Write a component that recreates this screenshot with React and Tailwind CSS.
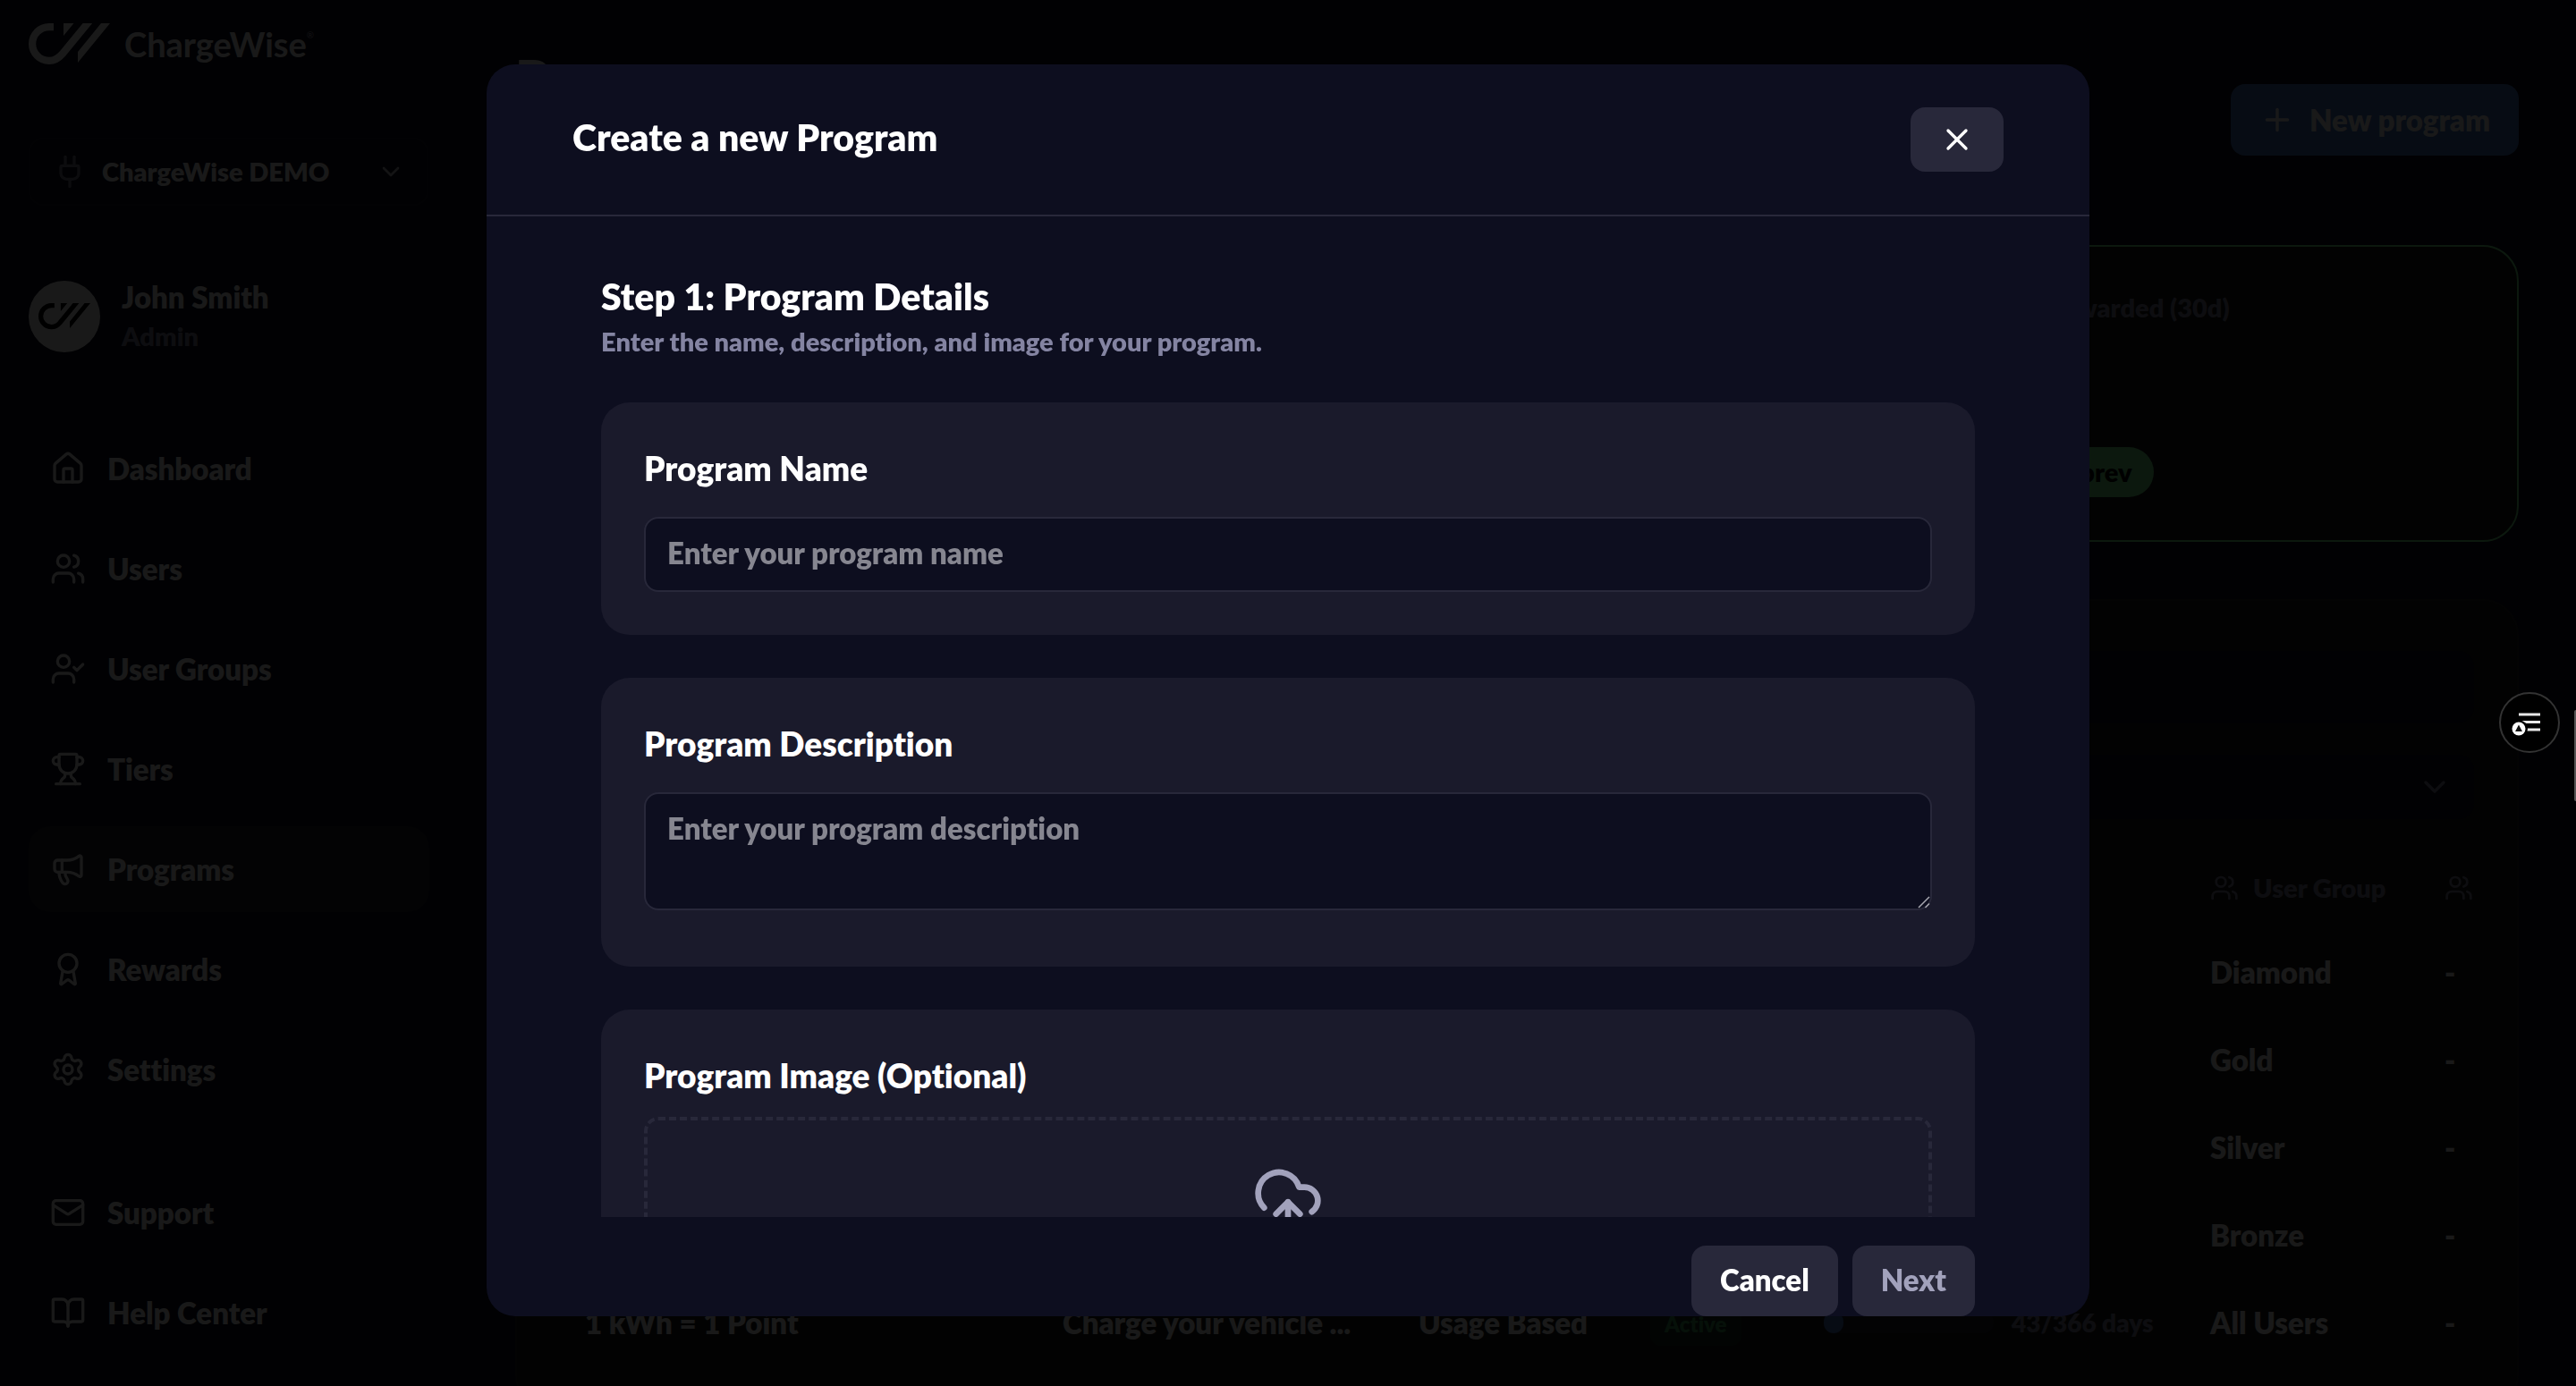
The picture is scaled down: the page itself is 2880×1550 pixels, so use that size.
import {
  Award,
  BookOpen,
  ChevronDown,
  CloudUpload,
  House,
  Mail,
  Megaphone,
  Plug,
  Plus,
  Settings,
  Trophy,
  UserCheck,
  Users,
  X,
} from 'lucide-react';

const NAV_ITEMS = [
  { label: 'Dashboard', icon: House },
  { label: 'Users', icon: Users },
  { label: 'User Groups', icon: UserCheck },
  { label: 'Tiers', icon: Trophy },
  { label: 'Programs', icon: Megaphone, active: true },
  { label: 'Rewards', icon: Award },
  { label: 'Settings', icon: Settings },
];

const HELP_ITEMS = [
  { label: 'Support', icon: Mail },
  { label: 'Help Center', icon: BookOpen },
];

const PROGRAMS = [
  { group: 'Diamond' },
  { group: 'Gold' },
  { group: 'Silver' },
  { group: 'Bronze' },
  {
    group: 'All Users',
    name: '1 kWh = 1 Point',
    description: 'Charge your vehicle ...',
    type: 'Usage Based',
    status: 'Active',
    day: 43,
    days: 366,
  },
];

function LogoMark({ className }) {
  return (
    <svg viewBox="0 0 91 46" className={className} aria-hidden="true">
      <path
        d="M28 4.1H23a18.9 18.9 0 0 0 0 37.8c7 0 11-3.4 14.5-7.4L70-5"
        fill="none"
        stroke="currentColor"
        strokeWidth="8.2"
      />
      <path d="M39 0h11.5L39 14zM81 0h10L55 44V32z" fill="currentColor" />
    </svg>
  );
}

function NavLink({ label, icon: Icon, active }) {
  return (
    <a
      href="#"
      className={`flex h-24 items-center gap-6 rounded-3xl px-6 text-[33px] leading-[48px] ${
        active ? 'bg-[#1e1e2c]' : ''
      }`}
    >
      <Icon className="size-10 shrink-0" />
      {label}
    </a>
  );
}

function Sidebar() {
  return (
    <aside className="flex w-[512px] shrink-0 flex-col px-8 pt-6 text-white">
      <div className="flex h-[50px] items-center gap-4">
        <LogoMark className="h-[46px] w-[91px]" />
        <span className="flex items-start text-[38px] leading-[48px] font-bold">
          ChargeWise
          <span className="text-[10px] leading-7 text-[#8888a0]">®</span>
        </span>
      </div>

      <label className="mt-20 mr-px flex h-[76px] items-center gap-4 rounded-2xl border-2 border-[#1c1c2c] px-6">
        <Plug className="size-10 shrink-0 text-[#7c7c90]" />
        <select
          aria-label="Organization"
          className="min-w-0 flex-1 appearance-none bg-transparent text-[29px] leading-10 outline-none"
        >
          <option>ChargeWise DEMO</option>
        </select>
        <ChevronDown className="size-8 shrink-0 text-[#c0c0c8]" />
      </label>

      <div className="mt-[84px] flex h-20 items-center gap-6">
        <div className="flex size-20 items-center justify-center rounded-full bg-white">
          <LogoMark className="w-[58px] text-black" />
        </div>
        <div className="pb-1">
          <p className="text-[33px] leading-[48px]">John Smith</p>
          <p className="text-[29px] leading-10 text-[#8888a0]">Admin</p>
        </div>
      </div>

      <nav className="mt-[82px] flex flex-col gap-4">
        {NAV_ITEMS.map((item) => (
          <NavLink key={item.label} {...item} />
        ))}
      </nav>
      <nav className="mt-16 flex flex-col gap-4">
        {HELP_ITEMS.map((item) => (
          <NavLink key={item.label} {...item} />
        ))}
      </nav>
    </aside>
  );
}

function ProgramTable() {
  return (
    <table className="mt-8 w-full table-fixed text-left text-[33px] leading-[48px] text-white">
      <colgroup>
        <col />
        <col className="w-[402px]" />
        <col className="w-[255px]" />
        <col className="w-[194px]" />
        <col className="w-[432px]" />
        <col className="w-[262px]" />
        <col className="w-[65px]" />
      </colgroup>
      <thead>
        <tr className="h-[90px] text-[29px] text-[#8888a0]">
          <th colSpan={5} />
          <th className="pl-8 font-extrabold">
            <span className="flex items-center gap-4">
              <Users className="size-8" />
              User Group
            </span>
          </th>
          <th className="pl-8">
            <Users className="size-8" />
          </th>
        </tr>
      </thead>
      <tbody>
        {PROGRAMS.map((program) => (
          <tr key={program.group} className="h-[98px]">
            <td className="pl-7">{program.name}</td>
            <td className="pl-8">{program.description}</td>
            <td className="pl-7">{program.type}</td>
            <td className="pl-8">
              {program.status && (
                <span className="inline-block rounded-xl bg-[#143020] px-4 align-middle text-[24px] text-[#3ca05a]">
                  {program.status}
                </span>
              )}
            </td>
            <td className="pl-8">
              {program.days && (
                <span className="flex items-center gap-5">
                  <span className="h-6 w-[190px] rounded-full bg-[#1f1f30]">
                    <span
                      className="block h-full rounded-full bg-[#4678c8]"
                      style={{ width: `${(program.day / program.days) * 100}%` }}
                    />
                  </span>
                  <span className="text-[28px] text-[#8888a0]">
                    {program.day}/{program.days} days
                  </span>
                </span>
              )}
            </td>
            <td className="pl-8">{program.group}</td>
            <td className="pl-8">-</td>
          </tr>
        ))}
      </tbody>
    </table>
  );
}

function ProgramsPage() {
  return (
    <main className="min-w-0 flex-1 px-16 pt-14 text-white">
      <header className="flex h-[156px] items-center justify-between">
        <h1 className="self-start text-[60px] leading-[64px]">Programs</h1>
        <button
          type="button"
          className="flex h-20 items-center gap-4 rounded-2xl bg-[#4678c8] px-8 text-[33px] leading-[48px]"
        >
          <Plus className="size-10" />
          New program
        </button>
      </header>

      <section className="mt-[62px] grid grid-cols-3 gap-8">
        <div className="col-start-3 flex h-[332px] flex-col justify-between rounded-[40px] border-2 border-[#78f08c] bg-[#1a1a1a] px-12 py-12 text-[29px] leading-10">
          <p className="w-[352px] text-right text-[#8888a0]">Awarded (30d)</p>
          <p className="w-[267px] rounded-full bg-[#78f08c] px-6 py-2 text-right text-black">vs prev</p>
        </div>
      </section>

      <section className="mt-16 rounded-[40px] border-2 border-[#202020] bg-[#1c1c1c] px-12 pt-14 pb-12">
        <input
          type="search"
          aria-label="Search programs"
          className="block h-20 w-full rounded-2xl bg-[#0d0d1e] px-6"
        />
        <label className="mt-9 flex h-[72px] items-center rounded-2xl bg-[#0d0d1e] px-6">
          <select aria-label="Filter by status" className="min-w-0 flex-1 appearance-none bg-transparent">
            <option></option>
          </select>
          <ChevronDown className="size-10 text-[#8888a0]" />
        </label>
        <ProgramTable />
      </section>
    </main>
  );
}

function Card({ children }) {
  return <div className="rounded-[32px] bg-[#1a1a2b] p-12">{children}</div>;
}

function CreateProgramModal() {
  const field =
    'block w-full rounded-2xl border-2 border-[#28283a] bg-[#0d0e1f] px-6 pt-3.5 pb-[18px] text-[33px] leading-[48px] text-white placeholder:text-[#868690] outline-none';
  const label = 'block pb-1 text-[37px] leading-[52px]';

  return (
    <div
      role="dialog"
      aria-labelledby="modal-title"
      className="flex h-full w-full max-w-[1792px] flex-col overflow-hidden rounded-[32px] bg-[#0d0e1f] text-white"
    >
      <header className="flex items-center justify-between border-b-2 border-[#28283a] px-24 py-12">
        <h2 id="modal-title" className="pb-1 text-[41px] leading-[56px]">
          Create a new Program
        </h2>
        <button
          type="button"
          aria-label="Close"
          className="flex h-[72px] items-center rounded-2xl bg-[#28283a] px-8"
        >
          <X className="size-10" />
        </button>
      </header>

      <form className="flex min-h-0 flex-1 flex-col px-32">
        <div className="min-h-0 flex-1 overflow-hidden pt-16">
          <h3 className="pb-1 text-[41px] leading-[52px]">Step 1: Program Details</h3>
          <p className="text-[29px] leading-10 text-[#8484a2]">
            Enter the name, description, and image for your program.
          </p>

          <div className="mt-12 flex flex-col gap-12">
            <Card>
              <label htmlFor="program-name" className={label}>
                Program Name
              </label>
              <input
                id="program-name"
                type="text"
                placeholder="Enter your program name"
                className={`mt-6 ${field}`}
              />
            </Card>

            <Card>
              <label htmlFor="program-description" className={label}>
                Program Description
              </label>
              <div className="relative mt-6 mb-[15px]">
                <textarea
                  id="program-description"
                  rows={2}
                  placeholder="Enter your program description"
                  className={`resize-none ${field}`}
                />
                <svg
                  viewBox="0 0 14 14"
                  className="pointer-events-none absolute right-0.5 bottom-0.5 size-3.5"
                  aria-hidden="true"
                >
                  <path d="M1 13L13 1M8.500 13L13 8.500" stroke="#a8a8b0" strokeWidth="1.5" />
                </svg>
              </div>
            </Card>

            <Card>
              <p className={label}>Program Image (Optional)</p>
              <button
                type="button"
                aria-label="Upload image"
                className="mt-4 flex w-full justify-center rounded-2xl border-4 border-dashed border-[#28283a] py-12"
              >
                <CloudUpload className="size-20 text-[#a2a2bc]" />
              </button>
            </Card>
          </div>
        </div>

        <footer className="flex justify-end gap-4 pt-8 text-[33px] leading-[48px]">
          <button type="button" className="h-[79px] rounded-2xl bg-[#28283a] px-8 pb-1">
            Cancel
          </button>
          <button type="submit" disabled className="h-[79px] rounded-2xl bg-[#28283a] px-8 pb-1 text-[#a2a2bc]">
            Next
          </button>
        </footer>
      </form>
    </div>
  );
}

// Round launcher pinned to the right edge of the window
function AssistantButton() {
  return (
    <button
      type="button"
      aria-label="Open assistant"
      className="fixed top-[774px] right-[18px] flex size-[68px] items-center justify-center rounded-full border-2 border-[#333333] bg-black"
    >
      <svg viewBox="0 0 32 32" className="size-8" aria-hidden="true">
        <path d="M4 7h24M4 15.5h24M4 24h24" stroke="#e8e8e8" strokeWidth="3" />
        <circle cx="4.500" cy="23" r="9.5" fill="#000" />
      </svg>
      <svg viewBox="0 0 16 16" className="absolute bottom-[17px] left-3 size-4" aria-hidden="true">
        <circle cx="8" cy="8" r="7.5" fill="#fff" />
        <path d="M8 3.500l4 7.500H4z" fill="#111" />
      </svg>
    </button>
  );
}

export default function App() {
  return (
    <div className="h-screen overflow-hidden bg-[#0d0d1e] font-['Lato',sans-serif] font-extrabold [font-variant-ligatures:no-common-ligatures]">
      <div className="flex">
        <Sidebar />
        <ProgramsPage />
      </div>

      <div className="fixed inset-0 flex justify-center bg-black/90 pt-[72px] pb-[78px]">
        <CreateProgramModal />
      </div>

      <AssistantButton />
      <div className="fixed top-[794px] right-0 h-[102px] w-0.5 rounded-l-full bg-[#555555]" />
    </div>
  );
}
